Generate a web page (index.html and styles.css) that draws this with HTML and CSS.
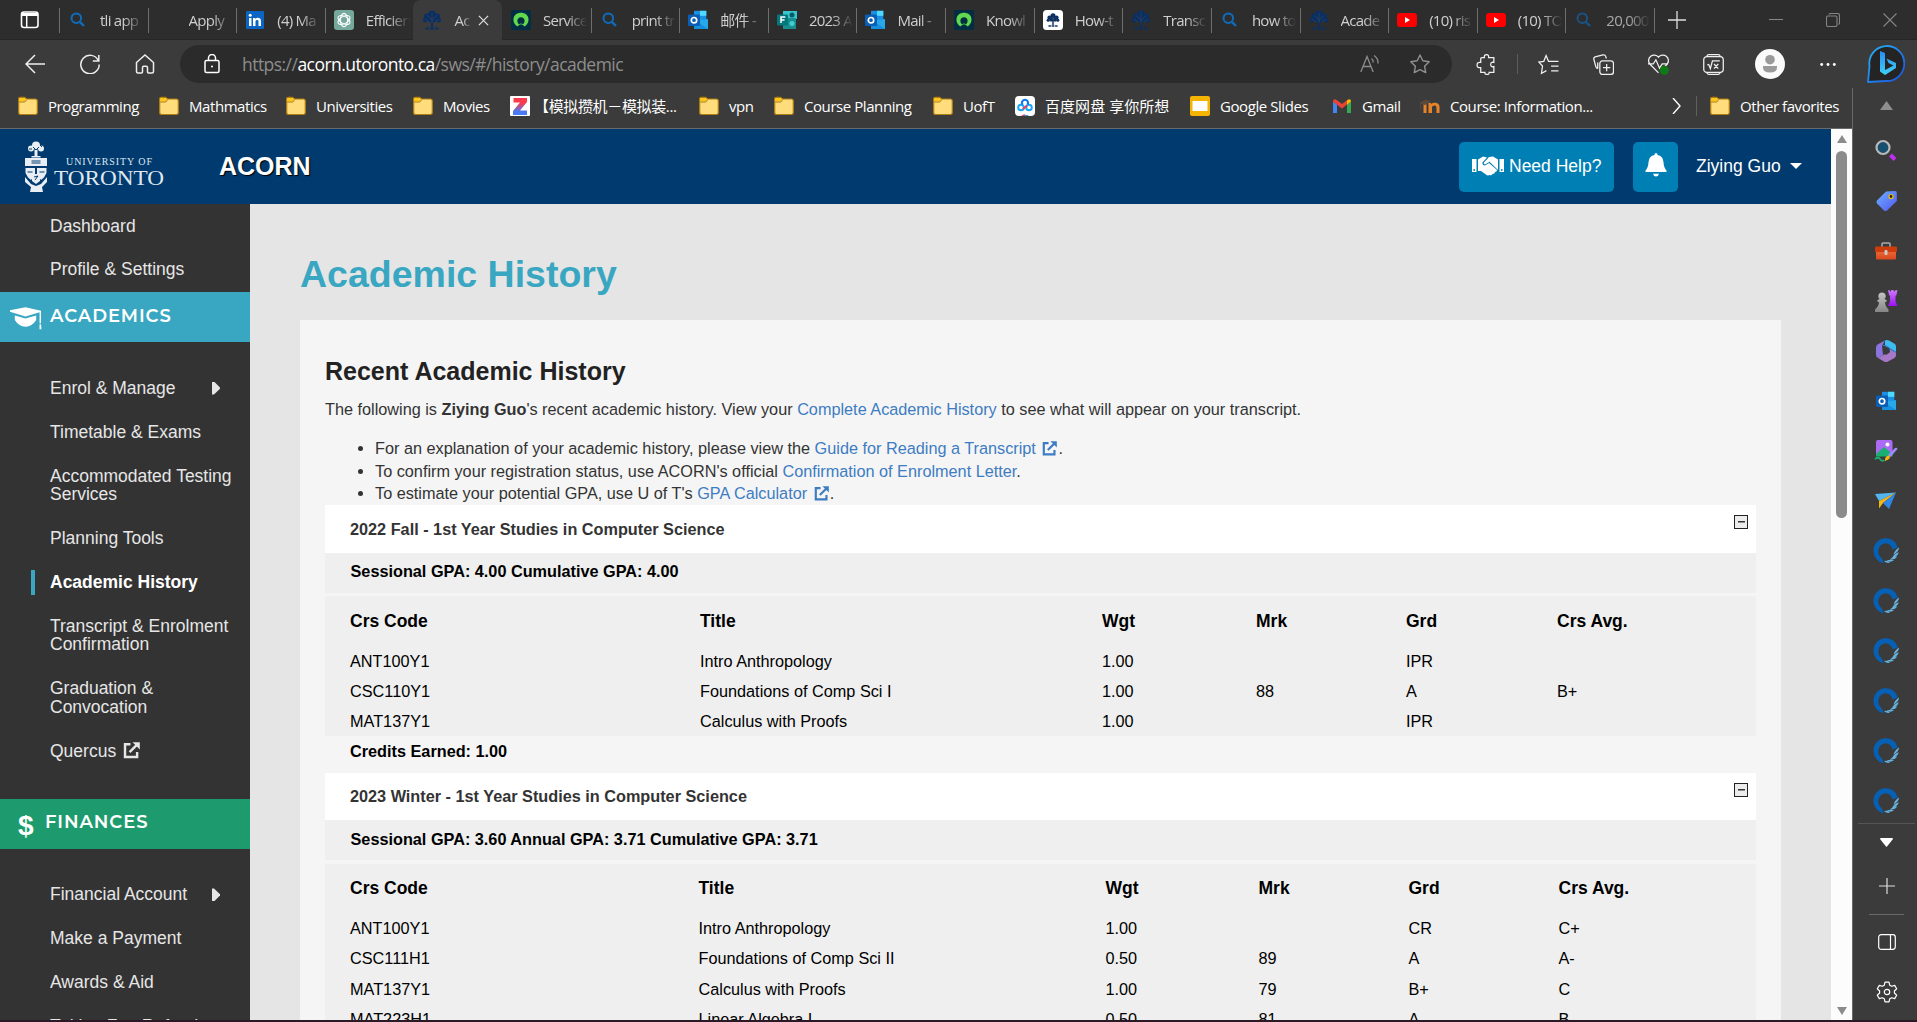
FILE: index.html
```html
<!DOCTYPE html>
<html lang="en">
<head>
<meta charset="utf-8">
<title>ACORN - Academic History</title>
<link rel="stylesheet" href="styles.css">
</head>
<body>
<svg class="defs" aria-hidden="true">
  <defs>
    <linearGradient id="g-bing" x1="0" y1="0" x2="1" y2="1"><stop offset="0" stop-color="#25b7f5"/><stop offset="1" stop-color="#1c4fe0"/></linearGradient>
    <linearGradient id="g-b" x1="0" y1="0" x2="0" y2="1"><stop offset="0" stop-color="#2a8cf5"/><stop offset="1" stop-color="#3fd0f5"/></linearGradient>
    <linearGradient id="g-tag" x1="0" y1="0" x2="1" y2="1"><stop offset="0" stop-color="#6fb0ff"/><stop offset="1" stop-color="#5358f0"/></linearGradient>
    <linearGradient id="g-rook" x1="0" y1="0" x2="0" y2="1"><stop offset="0" stop-color="#cf7cff"/><stop offset="1" stop-color="#9a10f0"/></linearGradient>
    <linearGradient id="g-pawn" x1="0" y1="0" x2="0" y2="1"><stop offset="0" stop-color="#c4c4c4"/><stop offset="1" stop-color="#858585"/></linearGradient>
    <linearGradient id="g-box" x1="0" y1="0" x2="0" y2="1"><stop offset="0" stop-color="#f0703e"/><stop offset="1" stop-color="#d8481c"/></linearGradient>
    <linearGradient id="g-z" x1="0" y1="0" x2="0" y2="1"><stop offset="0.3" stop-color="#fb3a4c"/><stop offset="0.8" stop-color="#4a7bf5"/></linearGradient>
  </defs>
  <symbol id="i-search" viewBox="0 0 20 20"><g fill="none" stroke="#0f6cbd" stroke-width="2"><circle cx="8.3" cy="8.2" r="4.8"/><path d="M11.8 11.8 16 16" stroke-width="2.4"/></g></symbol>
  <symbol id="i-folder" viewBox="0 0 20 20"><path d="M.7 3Q.7 1.3 2.2 1.3H6.5L8.6 3H17.5Q19.3 3 19.3 5V16.8Q19.3 18.5 17.5 18.5H2.5Q.7 18.5.7 16.8Z" fill="#ffdc7c" stroke="#ad7d10" stroke-width="1.2"/><path d="M1.3 3Q1.3 1.9 2.4 1.9H6.3L8 3.4 6.5 5.6H1.3Z" fill="#ffc61a"/><path d="M1.2 6H6.8L8.7 3.6" fill="none" stroke="#ad7d10"/></symbol>
  <symbol id="i-tree" viewBox="0 0 20 20"><g fill="#0a2f63"><circle cx="10" cy="4" r="3.6"/><circle cx="5" cy="6.500" r="3"/><circle cx="15" cy="6.500" r="3"/><circle cx="3.2" cy="10.3" r="2.3"/><circle cx="16.8" cy="10.3" r="2.3"/><circle cx="8" cy="9.500" r="2.700"/><circle cx="12.5" cy="9.500" r="2.700"/><path d="M9 10h2v6l1.500.800H7.500L9 16Z"/><path d="M3.500 17.600h3.500v2H3.500ZM8 17.600h4v2H8ZM13 17.600h3.500v2H13Z"/></g><g stroke="#33425c" stroke-width=".8" fill="none"><path d="M10 13V3M10 10 5.500 5.500M10 11l4.500-5.500M3 9l4 3M17 9l-4 3"/></g></symbol>
  <symbol id="i-outlook" viewBox="0 0 20 20"><path d="M6 .8h12.3V10H6Z" fill="#1a8fe3"/><path d="M12 .8h6.3v5H12Z" fill="#50d9ff"/><path d="M6 9h14v10H6Z" fill="#1490df"/><path d="m7 10 13 9V9.5Z" fill="#28a8ea"/><rect y="4.5" width="12" height="11.5" rx="1" fill="#0a5eb5"/><circle cx="6" cy="10.2" r="2.7" fill="none" stroke="#fff" stroke-width="1.7"/></symbol>
  <symbol id="i-snow" viewBox="0 0 20 20"><rect width="20" height="20" rx="1.5" fill="#032d42"/><path d="M6.200 16.500C1.500 13.300 1.400 7 5 4.300 8 2.300 12 2.300 15 4.300c3.600 2.700 3.500 9-1.200 12.200L11.500 14.700Q10 14 8.500 14.700ZM10 7.300C5.500 7.300 5.700 13 8 14.200Q10 13 12 14.200C14.300 13 14.500 7.300 10 7.300Z" fill="#62d84e" fill-rule="evenodd"/></symbol>
  <symbol id="i-yt" viewBox="0 0 20 20"><rect y="3" width="20" height="14" rx="3" fill="#f00"/><path d="m8 7 5 3-5 3Z" fill="#fff"/></symbol>
  <symbol id="i-ext" viewBox="0 0 16 16"><path d="M7 2.2H1.9V14.2H13.3V9.5M6.2 9.5 14 1.8" fill="none" stroke="currentColor" stroke-width="2.300"/><path d="M9 .2h6.8V7Z" fill="currentColor"/></symbol>
  <symbol id="i-q" viewBox="0 0 26 26"><path d="M11 25.2A12.4 12.6 0 1 1 24.8 9.5L19.5 11.500A7.200 8 0 1 0 8.500 20Z" fill="#0560b6"/><g fill="#66b1de"><path d="M26 9.500q.2 4-5.400 6.900.8-4 5.400-6.900ZM25.800 14.200q-.7 4-6.800 5.700 1.500-3.800 6.800-5.700ZM24.200 18.600q-2 3.200-7.400 3.300 2-2.900 7.400-3.300ZM21 22.300q-2.800 2.400-7.500.7 2.500-2 7.500-.7ZM17 24.800q-3.300 1-6-1.800 2.600-.7 6 1.800Z"/></g></symbol>
</svg>

<div class="window">
  <div class="tabstrip">
    <div class="tab-actions"><svg width="20" height="20" viewBox="0 0 20 20"><rect x="1.500" y="2" width="16.500" height="15.500" rx="2.500" fill="none" stroke="#fff" stroke-width="1.600"/><path d="M2 3h16v3H2Z" fill="#fff"/><path d="M6.700 5v12" stroke="#fff" stroke-width="1.500"/></svg></div>
    <div class="tab"><svg><use href="#i-search"/></svg><span>tli app</span></div>
    <div class="tab"><i></i><span>Apply</span></div>
    <div class="tab"><svg viewBox="0 0 20 20"><rect x="1" y="1" width="18" height="18" rx="1" fill="#0a66c2"/><path d="M4 8h2.500v8H4ZM8 8h2.400v1.200C11.800 7 16 7.300 16 11v5h-2.500v-4.500c0-2-3-2-3 0V16H8Z" fill="#fff"/><circle cx="5.200" cy="5.300" r="1.500" fill="#fff"/></svg><span>(4) Ma</span></div>
    <div class="tab plain"><svg viewBox="0 0 20 20"><rect width="20" height="20" rx="3" fill="#75a99c"/><g fill="none" stroke="#fff" stroke-width="1.100"><ellipse cx="10" cy="10" rx="3.600" ry="6.600"/><ellipse cx="10" cy="10" rx="3.600" ry="6.600" transform="rotate(60 10 10)"/><ellipse cx="10" cy="10" rx="3.600" ry="6.600" transform="rotate(120 10 10)"/></g></svg><span>Efficien</span></div>
    <div class="tab active"><svg><use href="#i-tree"/></svg><span>Ac</span><svg class="close" viewBox="0 0 12 12"><path d="m1 1 10 10M11 1 1 11" stroke="#ddd" stroke-width="1.400"/></svg></div>
    <div class="tab"><svg><use href="#i-snow"/></svg><span>Service</span></div>
    <div class="tab"><svg><use href="#i-search"/></svg><span>print tr</span></div>
    <div class="tab"><svg><use href="#i-outlook"/></svg><span>邮件 -</span></div>
    <div class="tab"><svg viewBox="0 0 20 20"><path d="M6 1h14v8H6Z" fill="#37c6d0"/><path d="M6 8h13v11H6Z" fill="#1a8f92"/><circle cx="15" cy="5" r="2.500" fill="#075d63"/><circle cx="15" cy="13.500" r="2.500" fill="#3fd0d0"/><rect y="4.500" width="11" height="11" rx="1" fill="#03787c"/><path d="M4 13V7h4.300M4 10h3.500" fill="none" stroke="#fff" stroke-width="1.500"/></svg><span>2023 A</span></div>
    <div class="tab"><svg><use href="#i-outlook"/></svg><span>Mail -</span></div>
    <div class="tab"><svg><use href="#i-snow"/></svg><span>Knowl</span></div>
    <div class="tab"><svg viewBox="0 0 20 20"><rect width="20" height="20" rx="3.500" fill="#fff"/><use href="#i-tree" x="3" y="3" width="14" height="14"/></svg><span>How-t</span></div>
    <div class="tab"><svg><use href="#i-tree"/></svg><span>Transc</span></div>
    <div class="tab"><svg><use href="#i-search"/></svg><span>how to</span></div>
    <div class="tab"><svg><use href="#i-tree"/></svg><span>Acade</span></div>
    <div class="tab"><svg><use href="#i-yt"/></svg><span>(10) ris</span></div>
    <div class="tab"><svg><use href="#i-yt"/></svg><span>(10) TO</span></div>
    <div class="tab asleep"><svg><use href="#i-search"/></svg><span>20,000</span></div>
    <div class="newtab"><svg width="18" height="18" viewBox="0 0 18 18"><path d="M9 0v18M0 9h18" stroke="#ddd" stroke-width="1.300"/></svg></div>
    <div class="winctl">
      <svg width="14" height="14" viewBox="0 0 14 14"><path d="M0 6.500h14"/></svg>
      <svg width="14" height="14" viewBox="0 0 14 14"><rect x=".5" y="3" width="10.500" height="10.500" rx="1.500"/><path d="M3 1.500Q3.300.5 4.500.5H11.500Q13.500.5 13.500 2.500V10Q13.500 11 12.500 11.500"/></svg>
      <svg width="14" height="14" viewBox="0 0 14 14"><path d="m.5.5 13 13M13.500.5l-13 13"/></svg>
    </div>
  </div>

  <div class="toolbar">
    <svg class="nav" width="20" height="20" viewBox="0 0 20 20"><path d="M20 10H1M10 1 1 10l9 9"/></svg>
    <svg class="nav" width="20" height="20" viewBox="0 0 20 20"><path d="M18.300 6.500A9.200 9.200 0 1 0 19.200 10.500M18.800 1V7H12.800"/></svg>
    <svg class="nav" width="20" height="20" viewBox="0 0 20 20"><path d="M1.500 8.500 10 1l8.500 7.500V17.500Q18.500 19 17 19H13.500Q12.500 19 12.500 18V13.500Q12.500 12.300 11.300 12.300H8.700Q7.500 12.300 7.500 13.500V18Q7.500 19 6.500 19H3Q1.500 19 1.500 17.500Z"/></svg>
    <div class="address">
      <svg width="16" height="20" viewBox="0 0 16 20" fill="none" stroke="#fff" stroke-width="1.500"><rect x="1" y="6.500" width="14" height="12" rx="1.500"/><path d="M4.500 6.500V4a3.500 3.500 0 0 1 7 0V6.500"/><circle cx="8" cy="12.500" r="1" fill="#fff" stroke="none"/></svg>
      <div class="url">https://<b>acorn.utoronto.ca</b>/sws/#/history/academic</div>
      <svg width="20" height="20" viewBox="0 0 20 20" fill="none" stroke="#8c8c8c" stroke-width="1.300"><path d="M.8 18 7 2.500 13.200 18M3 12.500h8M11.500 4.500q2 1.500 1.700 4M14 1.500q4.500 3 4 8"/></svg>
      <svg class="star" width="20" height="20" viewBox="0 0 20 20" fill="none" stroke="#909090" stroke-width="1.400"><path d="m10 1 2.800 5.800 6.400.9-4.600 4.500 1.100 6.400L10 15.600 4.300 18.600 5.400 12.200.8 7.700l6.400-.9Z" stroke-linejoin="round"/></svg>
    </div>
    <div class="tools">
      <svg viewBox="0 0 20 20"><path d="M5.500 3.500H8Q7.500.7 10 .7T12 3.500H17V8Q14 7.300 14 10T17 12V17.500H12.500Q12.800 19.500 10.500 19.500T8.500 17.500H4.500V13Q1 13.500 1 10.500T4.500 8V4.500Q4.500 3.500 5.500 3.500Z"/></svg>
      <s></s>
      <svg viewBox="0 0 20 20"><path d="M8 15.800 3.300 18.500 4.300 11.500.8 7.700 5.500 7 7.700 1.500 10 7H19.500M12.500 11.500h7M12.500 16h7"/></svg>
      <svg viewBox="0 0 20 20"><rect x="6.500" y="6.500" width="13" height="13" rx="2.500"/><path d="M13 9.500v7M9.500 13h7M4.500 14Q3 13.500 2.700 12L.8 5Q.3 3.500 2 2.800L9.500.8Q11.500.5 12 2L12.700 4.300M4.500 14V8"/></svg>
      <svg viewBox="0 0 20 20"><path d="M10 18 1.700 9.500A4.700 4.700 0 0 1 10 3a4.700 4.700 0 0 1 8.300 6.500L14 14M0 9.500h5l2.500-4 3.500 8 2.500-4H19"/><circle cx="15.500" cy="15.500" r="4.300" fill="#107c10" stroke="none"/><path d="m13.500 15.500 1.500 1.500 2.500-3" stroke="#073"/></svg>
      <svg viewBox="0 0 20 20"><rect x=".7" y="2.500" width="18.600" height="15" rx="3"/><path d="M3.500 2.500Q4 .7 5.500.7h9Q16 .7 16.500 2.500M3.500 17.500Q4 19.300 5.500 19.300h9Q16 19.300 16.500 17.500M4 10.500 5.500 10l1.500 4L9 6.500h7M10.500 9.500l4 4.500M14.500 9.500l-4 4.500"/></svg>
      <div class="avatar"><svg viewBox="0 0 30 30"><circle cx="15" cy="15" r="15" fill="#fafafa"/><circle cx="15" cy="10.700" r="4.800" fill="#9a9a9a"/><path d="M8 17h14v1.500q0 5-7 5t-7-5Z" fill="#9a9a9a"/></svg></div>
      <svg class="dots" viewBox="0 0 20 20"><g fill="#fff" stroke="none"><circle cx="3" cy="10" r="1.600"/><circle cx="10" cy="10" r="1.600"/><circle cx="17" cy="10" r="1.600"/></g></svg>
    </div>
    <svg class="bing" viewBox="0 0 38 40"><path d="M1 38 2.500 22A17.500 17.500 0 1 1 19.500 37Z" fill="#242424" stroke="url(#g-bing)" stroke-width="1.800" stroke-linejoin="round"/><path d="m13 7 5 2V26L26.500 21.500 21.500 19 19.500 14.500 29 19v5L18 31l-5-3.500Z" fill="url(#g-b)"/></svg>
  </div>

  <div class="lower">
    <div class="left">
      <div class="bookmarks">
        <div class="bm"><svg><use href="#i-folder"/></svg>Programming</div>
        <div class="bm"><svg><use href="#i-folder"/></svg>Mathmatics</div>
        <div class="bm"><svg><use href="#i-folder"/></svg>Universities</div>
        <div class="bm"><svg><use href="#i-folder"/></svg>Movies</div>
        <div class="bm zh"><svg viewBox="0 0 20 20"><rect width="20" height="20" rx="1" fill="#fff"/><path d="M3.500 2h13.500v4L10 14.500h7V19H3V15l7-8.500H3.500Z" fill="url(#g-z)"/></svg>【模拟攒机－模拟装...</div>
        <div class="bm"><svg><use href="#i-folder"/></svg>vpn</div>
        <div class="bm"><svg><use href="#i-folder"/></svg>Course Planning</div>
        <div class="bm"><svg><use href="#i-folder"/></svg>UofT</div>
        <div class="bm zh2"><svg viewBox="0 0 20 20"><rect width="20" height="20" rx="4" fill="#fff"/><g fill="none" stroke-width="2"><circle cx="6" cy="11.500" r="2.800" stroke="#18a7f5"/><circle cx="14" cy="11.500" r="2.800" stroke="#18a7f5"/><path d="M7.500 8.500a3 3 0 1 1 5 0" stroke="#0e77f0"/><path d="m8 13 4-3.500" stroke="#f23c5c"/></g><path d="M6 20q4-3 4-1v1Z" fill="#f23c5c"/><path d="M10 19q2-1 4 1h-4Z" fill="#18a7f5"/></svg>百度网盘 享你所想</div>
        <div class="bm"><svg viewBox="0 0 20 20"><rect width="20" height="20" rx="2" fill="#f5b400"/><rect x="2.500" y="5" width="15" height="10" fill="#fff"/></svg>Google Slides</div>
        <div class="bm"><svg viewBox="0 0 20 20"><path d="M1 5.500 5 8.500V17H1Z" fill="#4285f4"/><path d="M15 8.500 19 5.500V17H15Z" fill="#34a853"/><path d="M1 5Q1.500 2.500 4 3.500L10 8l6-4.500L15 8.500 10 12.500 1 5.700Z" fill="#ea4335"/><path d="M15 4.500Q18.500 1.500 19 5.500L15 8.700Z" fill="#fbbc04"/></svg>Gmail</div>
        <div class="bm"><svg viewBox="0 0 20 20"><path d="M3.500 8h3v9h-3ZM8.500 17V7h2.700v1.200c2-2.200 8.300-2 8.300 2.800v6h-3v-5.500c0-3-4.500-2.500-4.500 0V17Z" fill="#e8832a"/><path d="M0 6.500 6 3.500 11 5.500 5 9 1 8v5H.200Z" fill="#5a4a3c"/></svg>Course: Information...</div>
        <svg class="chev" width="9" height="16" viewBox="0 0 9 16"><path d="m1 0 7 8-7 8" fill="none" stroke="#fff" stroke-width="1.400"/></svg>
        <s></s>
        <div class="bm"><svg><use href="#i-folder"/></svg>Other favorites</div>
      </div>

      <div class="viewport">
        <div class="page">
          <header class="head">
            <svg class="logo" width="144" height="52" viewBox="0 0 144 52">
              <g fill="#e8eef4"><circle cx="12" cy="4.500" r="4"/><circle cx="7" cy="7.500" r="3"/><circle cx="17" cy="7.500" r="3"/><path d="M10.500 9h3v6h3v1.500H7.500V15h3Z"/><path d="M1 17h22v8H1ZM1.500 27H11v7L7 39 4 36.500 1.500 32ZM13 27h9.500v5L20 36.500 17 39l-4-5Z"/><path d="M1 36 7 43l5 2 5-2 6-7v5l-5 5 1 5H6l1-5-6-5Z"/><path d="M8 33h8v7l-4 3-4-3Z"/></g>
              <g fill="none" stroke="#003a6f" stroke-width="1"><path d="M9 6 12 9 15 6M7.500 20h9M7.500 22h9M3.500 31h5M15.500 31h5M10 36l4-1-3 4M5 8h3M16 4l2 2"/></g>
              <text class="logo-sm" x="42" y="24" textLength="86" lengthAdjust="spacing">UNIVERSITY OF</text>
              <text class="logo-lg" x="30" y="44" textLength="110" lengthAdjust="spacingAndGlyphs">TORONTO</text>
            </svg>
            <div class="brand">ACORN</div>
            <div class="btn help"><svg width="32" height="20" viewBox="0 0 32 20"><g fill="#fff"><path d="M0 3h4.500v13H0ZM27.500 3H32v13h-4.500ZM6 3.500 11 .5 15 1.500 10.500 6.500Q10 9.500 13 9.500L17 7l8 7q0 2-2 2 0 2-2.500 2-1 1.800-3 1-2 1-3.500-.5L9 15H6Z"/><path d="M26 3.500V14L17.500 5.800 13 8.500Q11 8 12 6.500L17 1 21 .5Z"/></g><circle cx="2.200" cy="14" r=".9" fill="#007fb5"/><circle cx="29.800" cy="14" r=".9" fill="#007fb5"/></svg><span>Need Help?</span></div>
            <div class="btn bell"><svg width="22" height="24" viewBox="0 0 22 24"><path d="M11 0q1.500 0 1.500 2 5.500 1 6 7 .3 6 3 8.500v1.500H.5V17.500Q3.200 15 3.500 9 4 3 9.500 2 9.500 0 11 0ZM8 20.800h6Q13.500 23.500 11 23.500T8 20.800Z" fill="#fff"/></svg></div>
            <div class="user">Ziying Guo<i class="caret"></i></div>
          </header>

          <div class="body">
            <nav class="side">
              <ul class="top"><li>Dashboard</li><li>Profile &amp; Settings</li></ul>
              <div class="band academics"><svg width="34" height="26" viewBox="0 0 34 26"><path d="M17 2 33 5.500V18.500h-1.500V7L17 11.500 1 6.500V5ZM6 10.500 17 13.500 28 10.500V15Q24 21.500 17 22 10 21.500 6 15Z" fill="#fff"/><path d="M31.500 19.500h1.500l.4 5h-2Z" fill="#fff"/></svg>ACADEMICS</div>
              <ul>
                <li>Enrol &amp; Manage<i class="arrow"></i></li>
                <li>Timetable &amp; Exams</li>
                <li>Accommodated Testing<br>Services</li>
                <li>Planning Tools</li>
                <li class="on">Academic History</li>
                <li>Transcript &amp; Enrolment<br>Confirmation</li>
                <li>Graduation &amp;<br>Convocation</li>
                <li>Quercus <svg class="ext"><use href="#i-ext"/></svg></li>
              </ul>
              <div class="band finances"><b>$</b>FINANCES</div>
              <ul>
                <li>Financial Account<i class="arrow"></i></li>
                <li>Make a Payment</li>
                <li>Awards &amp; Aid</li>
                <li>Tuition Fee Refund</li>
              </ul>
            </nav>

            <main>
              <h1>Academic History</h1>
              <section class="panel">
                <h2>Recent Academic History</h2>
                <p>The following is <b>Ziying Guo</b>'s recent academic history. View your <a>Complete Academic History</a> to see what will appear on your transcript.</p>
                <ul>
                  <li>For an explanation of your academic history, please view the <a>Guide for Reading a Transcript <svg class="ext"><use href="#i-ext"/></svg></a>.</li>
                  <li>To confirm your registration status, use ACORN's official <a>Confirmation of Enrolment Letter</a>.</li>
                  <li>To estimate your potential GPA, use U of T's <a>GPA Calculator <svg class="ext"><use href="#i-ext"/></svg></a>.</li>
                </ul>

                <div class="term fall">
                  <div class="term-head">2022 Fall - 1st Year Studies in Computer Science<i class="minus"></i></div>
                  <div class="gpa">Sessional GPA: 4.00 Cumulative GPA: 4.00</div>
                  <div class="courses">
                    <div class="row th"><span>Crs Code</span><span>Title</span><span>Wgt</span><span>Mrk</span><span>Grd</span><span>Crs Avg.</span></div>
                    <div class="row"><span>ANT100Y1</span><span>Intro Anthropology</span><span>1.00</span><span></span><span>IPR</span><span></span></div>
                    <div class="row"><span>CSC110Y1</span><span>Foundations of Comp Sci I</span><span>1.00</span><span>88</span><span>A</span><span>B+</span></div>
                    <div class="row"><span>MAT137Y1</span><span>Calculus with Proofs</span><span>1.00</span><span></span><span>IPR</span><span></span></div>
                  </div>
                  <div class="credits">Credits Earned: 1.00</div>
                </div>

                <div class="term winter">
                  <div class="term-head">2023 Winter - 1st Year Studies in Computer Science<i class="minus"></i></div>
                  <div class="gpa">Sessional GPA: 3.60 Annual GPA: 3.71 Cumulative GPA: 3.71</div>
                  <div class="courses">
                    <div class="row th"><span>Crs Code</span><span>Title</span><span>Wgt</span><span>Mrk</span><span>Grd</span><span>Crs Avg.</span></div>
                    <div class="row"><span>ANT100Y1</span><span>Intro Anthropology</span><span>1.00</span><span></span><span>CR</span><span>C+</span></div>
                    <div class="row"><span>CSC111H1</span><span>Foundations of Comp Sci II</span><span>0.50</span><span>89</span><span>A</span><span>A-</span></div>
                    <div class="row"><span>MAT137Y1</span><span>Calculus with Proofs</span><span>1.00</span><span>79</span><span>B+</span><span>C</span></div>
                    <div class="row"><span>MAT223H1</span><span>Linear Algebra I</span><span>0.50</span><span>81</span><span>A</span><span>B</span></div>
                  </div>
                </div>
              </section>
            </main>
          </div>
        </div>
        <div class="scroll"><i class="up"></i><div class="thumb"></div><i class="down"></i></div>
      </div>
    </div>

    <aside class="rail">
      <div class="rail-up"><svg width="13" height="10" viewBox="0 0 13 10"><path d="M6.500 0 13 9H0Z" fill="#8e8e8e"/></svg></div>
      <div class="ri"><svg viewBox="0 0 24 24"><circle cx="9" cy="8.500" r="6.500" fill="#17506f" stroke="#b9b9b9" stroke-width="2.200"/><path d="m16.500 16 4.500 4.500" stroke="#c12ef2" stroke-width="4"/></svg></div>
      <div class="ri"><svg viewBox="0 0 24 24"><path d="M12 2.500 21 2q1.800 0 1.800 2v8L13 21.500q-1.500 1.200-3 0L3 14.500q-1.200-1.500 0-3Z" fill="url(#g-tag)"/><circle cx="17" cy="7.500" r="2" fill="#222" stroke="#f2c000" stroke-width="1.200"/></svg></div>
      <div class="ri"><svg viewBox="0 0 24 24"><path d="M8 8V5Q8 4 9 4h6q1 0 1 1v3" fill="none" stroke="#aaa" stroke-width="1.600"/><rect x="2" y="10" width="20" height="10.500" rx="1" fill="url(#g-box)"/><rect x="1" y="7.500" width="22" height="5.500" rx="1" fill="#cc3d0d"/><rect x="10.500" y="11" width="3" height="5" rx="1" fill="#ccc"/></svg></div>
      <div class="ri"><svg viewBox="0 0 24 24"><path d="m14 1 2 .5.700 1.500L17.500 1h2l.500 2L21 1.500 23.500 1l-1 5-1 1v5.500l2 4.500h-9.500l2-4.500V7l-1-1Z" fill="url(#g-rook)"/><path d="M8 3.500a3.700 3.700 0 0 1 2.500 6.500l2 1v2h-1.500q0 4 3.500 7.500v2.500H1V20.500Q5 17 5 13H3.500v-2l2-1A3.700 3.700 0 0 1 8 3.500Z" fill="url(#g-pawn)"/></svg></div>
      <div class="ri"><svg viewBox="0 0 24 24"><path d="M11 1.500Q13 .5 15 1.500l6 3.500 1 2v6L17 10 11 7Z" fill="#3dbcf2"/><path d="M11 1.500 3.500 5.500Q2 6.500 2 8.500V16q0 2 2 3l5-3-1-9Z" fill="#8b73e0"/><path d="M8 7q3-3 9 3l5 3v3L19 18 16 12.500 12 7Z" fill="#3279d8"/><path d="M4 19 9 16l6-2 1-3.500L22 14v2q0 2-1.500 3L14 22.500q-2 1-4 0Z" fill="#a777c8"/><path d="m11 8 4 1 1 4-4 3-3-3Z" fill="#3a3a3a"/></svg></div>
      <div class="ri"><svg viewBox="-2 -2 24 24"><use href="#i-outlook" width="20" height="20"/></svg></div>
      <div class="ri"><svg viewBox="0 0 24 24"><rect x="2" y="1" width="16.500" height="16" rx="2" fill="#ac6bf5"/><path d="m2 15 8-7 8.500 7v2.500H2Z" fill="#1aaf72"/><circle cx="13.500" cy="5.500" r="2" fill="#fff"/><path d="m14 16 7-7q2-1 2.500 1l-7 8Z" fill="#9a8cf8"/><path d="M11 22q-.5-5 4-5.500 3 3-4 5.500Z" fill="#f7b615"/><path d="M1 20q4-2.500 5 0t4.500 1.500" fill="none" stroke="#1aaf72" stroke-width="1.800"/></svg></div>
      <div class="ri"><svg viewBox="0 0 24 24"><path d="m1 5 21-1.500L5 12Z" fill="#53b5ee"/><path d="M22 3.500 5 12v7.500L9 14Z" fill="#f7b516"/><path d="M22 3.500 15 20l-6-6Z" fill="#3187e8"/></svg></div>
      <div class="ri q"><svg><use href="#i-q"/></svg></div>
      <div class="ri q"><svg><use href="#i-q"/></svg></div>
      <div class="ri q"><svg><use href="#i-q"/></svg></div>
      <div class="ri q"><svg><use href="#i-q"/></svg></div>
      <div class="ri q"><svg><use href="#i-q"/></svg></div>
      <div class="ri q"><svg><use href="#i-q"/></svg></div>
      <div class="rail-foot">
        <svg width="13" height="9" viewBox="0 0 13 9"><path d="M0 1Q0 0 1 0h11q1 0 1 1L7 8.500Q6.500 9 6 8.500Z" fill="#fff"/></svg>
        <svg width="16" height="16" viewBox="0 0 16 16"><path d="M8 0v16M0 8h16" stroke="#ddd" stroke-width="1.200"/></svg>
        <hr>
        <svg width="18" height="16" viewBox="0 0 18 16"><rect x=".7" y=".7" width="16.600" height="14.600" rx="2.500" fill="none" stroke="#fff" stroke-width="1.200"/><path d="M12.500 1v14" stroke="#fff" stroke-width="1.200"/></svg>
        <svg width="22" height="22" viewBox="0 0 22 22"><path d="M9 1.200h4l.7 3 2 1.100 3-.9 2 3.400-2.300 2.200v2l2.300 2.200-2 3.400-3-.9-2 1.100-.7 3H9l-.7-3-2-1.100-3 .9-2-3.400L3.600 12v-2L1.300 7.800l2-3.400 3 .9 2-1.100Z" fill="none" stroke="#fff" stroke-width="1.200" stroke-linejoin="round"/><circle cx="11" cy="11" r="2.700" fill="none" stroke="#fff" stroke-width="1.200"/></svg>
      </div>
    </aside>
  </div>
</div>
</body>
</html>
```
FILE: styles.css
```css
* { box-sizing: border-box; }
body { margin: 0; background: #2b1a26; overflow: hidden; }
.defs { position: absolute; width: 0; height: 0; }
svg { flex: none; display: block; }
s { text-decoration: none; }
ul { list-style: none; margin: 0; padding: 0; }

.window { width: 1917px; height: 1020px; display: flex; flex-direction: column; overflow: hidden; background: #3b3b3b; font: 15px/20px "Open Sans", "Noto Sans CJK SC", sans-serif; color: #fff; }

/* tab strip */
.tabstrip { height: 40px; display: flex; background: #2d2d2d; color: #cfcfcf; box-shadow: inset 0 -1px #262626; }
.tab-actions { width: 59px; padding: 10px 0 0 20px; }
.tab { width: 88.620px; display: flex; align-items: center; padding-left: 9px; position: relative; }
.tab::before { content: ""; position: absolute; left: 0; top: 8px; width: 1px; height: 25px; background: #6e6e6e; }
.tab svg, .tab i { width: 20px; height: 20px; flex: none; }
.tab span { margin-left: 12px; width: 46px; white-space: nowrap; letter-spacing: -.75px; margin-top: -1px; mask-image: linear-gradient(90deg, #000 50%, transparent 96%); }
.tab.active { background: #3b3b3b; border-radius: 8px 8px 0 0; }
.tab.active::before, .tab.active + .tab::before { display: none; }
.tab.active span { width: 18px; }
.tab .close { width: 11px; height: 11px; margin-left: 6px; }
.tab.asleep { color: #a8a8a8; }
.tab.asleep svg { opacity: .6; }
.newtab { width: 115px; border-left: 1px solid #6e6e6e; margin: 8px 0 7px; padding: 3px 0 0 13px; }
.winctl { display: flex; gap: 43px; padding-top: 13px; }
.winctl svg { fill: none; stroke: #858585; stroke-width: 1.100; }

/* toolbar */
.toolbar { height: 48px; display: flex; align-items: center; padding-left: 25px; }
.nav { margin-right: 35px; fill: none; stroke: #eee; stroke-width: 1.500; }
.address { width: 1272px; height: 38px; margin-left: -10px; border-radius: 19px; background: #2b2b2b; display: flex; align-items: center; padding: 0 22px 0 24px; }
.url { flex: 1; margin-left: 22px; color: #8d8d8d; font-size: 17.500px; line-height: 24px; letter-spacing: -.54px; white-space: nowrap; margin-top: -1px; }
.url b { font-weight: 400; color: #fff; }
.star { margin-left: 30px; }
.tools { display: flex; align-items: center; margin-left: 24px; width: 391px; }
.tools > svg { width: 21px; height: 21px; margin-right: 34px; fill: none; stroke: #f0f0f0; stroke-width: 1.200; }
.tools > s { width: 1px; height: 20px; background: #5c5c5c; margin: 0 20px 0 -14px; }
.avatar { width: 30px; margin: 0 34px 0 -3px; }
.tools > .dots { width: 18px; margin-left: 0; margin-right: 0; }
.bing { width: 38px; height: 40px; }

.lower { flex: 1; display: flex; min-height: 0; }
.left { width: 1852px; display: flex; flex-direction: column; }
.bookmarks { height: 41px; border-bottom: 1px solid #6a6a6a; padding-left: 18px; display: grid; align-items: center; grid-template-columns: 141px 127px 127px 97px 189px 75px 159px 82px 175px 142px 88px 252px 24px 14px 142px; letter-spacing: -.43px; }
.bm { display: flex; align-items: center; white-space: nowrap; margin-top: -5px; }
.bm svg { width: 20px; height: 20px; margin-right: 10px; }
.bm.zh { letter-spacing: -.35px; }
.bm.zh svg { margin-right: 4px; }
.bm.zh2 { letter-spacing: .05px; }
.chev { margin-top: -4px; }
.bookmarks > s { width: 1px; height: 20px; background: #606060; margin-top: -4px; }

.viewport { flex: 1; display: flex; min-height: 0; }
.page { width: 1831px; overflow: hidden; font-family: "Liberation Sans", Arial, sans-serif; }
.scroll { width: 21px; background: #fcfcfc; display: flex; flex-direction: column; align-items: center; padding: 6px 0 5px; }
.up, .down { border: 5px solid transparent; }
.up { border-bottom: 8px solid #8b8b8b; border-top: 0; }
.down { border-top: 8px solid #8b8b8b; border-bottom: 0; }
.thumb { width: 11px; height: 367px; margin: 8px 0 auto; border-radius: 6px; background: #8b8b8b; }

/* ACORN header */
.head { height: 75px; background: #003a6f; display: flex; align-items: center; font-size: 17.500px; line-height: 22px; }
.logo { margin: 1px 0 0 24px; }
.logo text { fill: #dfe7ef; font-family: "Liberation Serif", serif; }
.logo-sm { font-size: 10px; }
.logo-lg { font-size: 22px; }
.brand { margin: -2px 0 0 51px; font-size: 25px; line-height: 30px; font-weight: 700; text-shadow: 1px 1px 1px #000; flex: 1; }
.btn { height: 50px; border-radius: 5px; background: #007fb5; display: flex; align-items: center; }
.help { width: 155px; padding: 0 0 2px 13px; gap: 5px; margin-right: 19px; white-space: nowrap; }
.bell { width: 45px; justify-content: center; padding-bottom: 3px; }
.user { width: 153px; padding: 0 0 2px 18px; display: flex; align-items: center; white-space: nowrap; }
.caret { border: 6px solid transparent; border-top-color: #fff; border-bottom: 0; margin-left: 9px; }

/* side navigation */
.body { display: flex; }
.side { width: 250px; height: 820px; background: #333; color: #e6e6e6; font-size: 17.500px; line-height: 18.400px; }
.side li { position: relative; margin: 0 0 25.600px 50px; white-space: nowrap; }
.side ul { padding-top: 36.600px; }
.side .top { padding-top: 12.600px; height: 88px; }
.side .top li { margin-bottom: 24.600px; }
.band { height: 50px; display: flex; align-items: center; color: #fff; font: 600 18px/24px "Montserrat", "Lato", sans-serif; letter-spacing: .9px; padding-bottom: 3px; }
.academics { background: #39a7c2; padding-left: 9px; gap: 8px; }
.academics svg { margin-top: 4px; width: 33px; }
.finances { background: #1e9b6e; margin-top: 38.600px; padding-left: 18px; }
.finances b { font: 700 28px/30px "Liberation Sans", Arial, sans-serif; width: 27px; letter-spacing: 0; margin-top: 7px; }
.side ul:not(.top) { display: flex; flex-direction: column; gap: 25.600px; }
.side ul:not(.top) li { margin-bottom: 0; }
.arrow { position: absolute; left: 162px; top: 3px; width: 8px; height: 13px; background: #e6e6e6; clip-path: polygon(0 0, 25% 0, 100% 45%, 100% 55%, 25% 100%, 0 100%); }
.side .on { font-weight: 700; color: #fff; }
.on::before { content: ""; position: absolute; left: -19px; top: -3px; width: 4px; height: 25px; background: #39a7c2; }
.ext { display: inline-block; width: 17px; height: 17px; vertical-align: -2px; margin-left: 2px; }

/* content */
main { width: 1581px; padding: 48px 50px 0; background: #e5e5e5; color: #333; }
h1 { margin: 0 0 24px; font-size: 37.500px; line-height: 44px; color: #39a7c2; }
.panel { background: #f5f5f5; height: 760px; padding: 36px 25px; font-size: 16.250px; line-height: 22.500px; }
h2 { margin: 0; font-size: 25px; line-height: 30px; color: #222; }
p { margin: 12px 0 16.500px; }
.panel a { color: #3d7cc2; }
.panel ul { list-style: disc; padding-left: 50px; }
.panel .ext { width: 15px; height: 15px; margin-left: 2px; margin-right: 1px; }
.term { font-weight: 700; color: #000; }
.term-head { height: 48px; line-height: 49px; background: #fff; color: #333; padding: 0 8px 0 25px; display: flex; justify-content: space-between; }
.minus { width: 14px; height: 14px; border: 1.500px solid #222; margin-top: 10px; background: linear-gradient(#333, #333) center / 7px 1.500px no-repeat #ececec; }
.gpa { height: 40px; line-height: 37px; background: #efefef; padding-left: 25.500px; margin-bottom: 3px; }
.courses { background: #efefef; padding-left: 25px; }
.row { display: grid; grid-template-columns: 350px 402px 154px 150px 151px 1fr; line-height: 30px; height: 30px; font-weight: 400; }
.th { font-size: 17.500px; font-weight: 700; height: 50.500px; line-height: 50.500px; }
.credits { line-height: 30px; height: 36.500px; padding-left: 25px; }
.winter .term-head { height: 47px; line-height: 47px; }
.winter .gpa { line-height: 39px; margin-bottom: 4px; }
.winter .row { grid-template-columns: 348.500px 407px 153px 150px 150px 1fr; line-height: 30.300px; height: 30.300px; }
.winter .row.th { height: 49.500px; line-height: 48.500px; }

/* browser sidebar */
.rail { width: 65px; border-left: 1px solid #6a6a6a; display: flex; flex-direction: column; padding-left: 2px; }
.rail-up { height: 36px; display: flex; align-items: center; justify-content: center; }
.ri { height: 50px; display: flex; align-items: center; justify-content: center; }
.ri svg { width: 24px; height: 24px; margin-top: 3px; }
.ri.q svg { width: 26px; height: 26px; }
.rail-foot { border-top: 1px solid #555; margin: -1px 2px 0 3px; padding-top: 14px; display: flex; flex-direction: column; align-items: center; }
.rail-foot svg + svg { margin-top: 31px; }
.rail-foot hr { width: 35px; border: 0; height: 1px; background: #6a6a6a; margin: 20px 0 19px; }
.rail-foot hr + svg + svg { margin-top: 31px; }
```
